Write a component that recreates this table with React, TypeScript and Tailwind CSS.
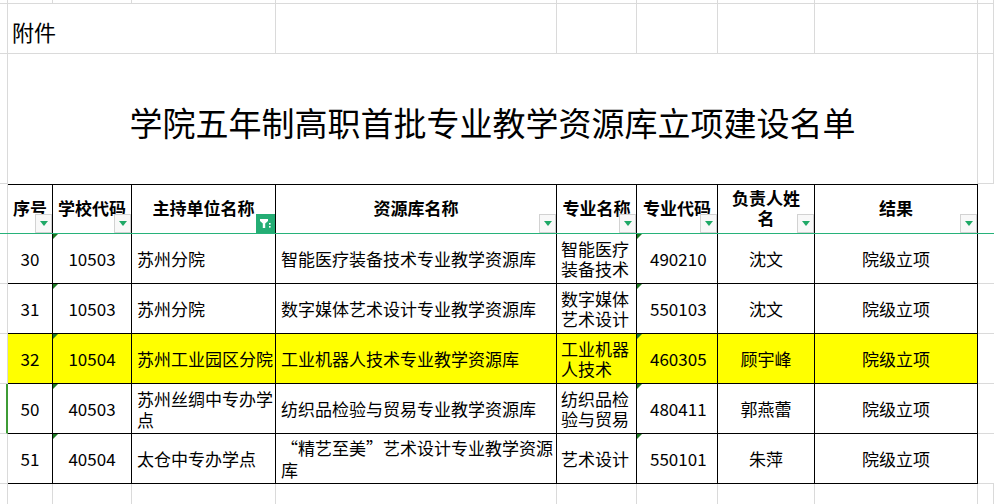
import React from "react";

type Row = {
  no: string;
  code: string;
  unit: string;
  lib: React.ReactNode;
  major: string;
  mcode: string;
  lead: string;
  result: string;
  hl?: boolean;
  sel?: boolean;
};

const rows: Row[] = [
  { no: "30", code: "10503", unit: "苏州分院", lib: "智能医疗装备技术专业教学资源库", major: "智能医疗装备技术", mcode: "490210", lead: "沈文", result: "院级立项" },
  { no: "31", code: "10503", unit: "苏州分院", lib: "数字媒体艺术设计专业教学资源库", major: "数字媒体艺术设计", mcode: "550103", lead: "沈文", result: "院级立项" },
  { no: "32", code: "10504", unit: "苏州工业园区分院", lib: "工业机器人技术专业教学资源库", major: "工业机器人技术", mcode: "460305", lead: "顾宇峰", result: "院级立项", hl: true },
  { no: "50", code: "40503", unit: "苏州丝绸中专办学点", lib: "纺织品检验与贸易专业教学资源库", major: "纺织品检验与贸易", mcode: "480411", lead: "郭燕蕾", result: "院级立项", sel: true },
  {
    no: "51",
    code: "40504",
    unit: "太仓中专办学点",
    lib: (
      <>
        “精艺至美”艺术设计专业教学资源
        <br />库
      </>
    ),
    major: "艺术设计",
    mcode: "550101",
    lead: "朱萍",
    result: "院级立项",
  },
];

const gray = "border-r border-b border-[#dadada]";
const blk = "relative border-r border-b border-black";

const FilterBtn = () => (
  <span className="absolute right-0 bottom-0 flex h-[19px] w-[17px] items-center justify-center border border-[#d2d2d2] bg-[#f8f8f8]">
    <span className="h-0 w-0 border-x-[4px] border-t-[5px] border-x-transparent border-t-[#1fa866]" />
  </span>
);

const ActiveFilter = () => (
  <span className="absolute right-0 bottom-0 flex h-[19px] w-[19px] items-center justify-center bg-[#24ad74]">
    <svg width="13" height="13" viewBox="0 0 13 13">
      <path d="M1 2h8v2L6.2 6.5V11H3.8V6.5L1 4z" fill="white" />
      <rect x="10" y="6" width="1.6" height="1.6" fill="white" />
      <rect x="10" y="9" width="1.6" height="1.6" fill="white" />
    </svg>
  </span>
);

const Tri = () => (
  <span className="absolute left-0 top-0 h-0 w-0 border-t-[5px] border-r-[5px] border-t-[#1d7a22] border-r-transparent" />
);

export default function App() {
  return (
    <div className="relative h-[504px] w-[994px] overflow-hidden bg-white text-black font-['Noto_Sans_CJK_SC',sans-serif]">
      <div className="grid grid-cols-[8px_45px_79px_144px_281px_80px_81px_97px_163px_16px] grid-rows-[4px_50px_130px_repeat(6,50px)_20px]">
        {/* top partial row */}
        {Array.from({ length: 10 }).map((_, i) => (
          <div key={"t" + i} className={gray} />
        ))}

        {/* 附件 row */}
        <div className={gray} />
        <div className={`col-span-3 flex items-center pl-[4px] pt-[5px] text-[22px] ${gray}`}>附件</div>
        {Array.from({ length: 6 }).map((_, i) => (
          <div key={"a" + i} className={gray} />
        ))}

        {/* title row */}
        <div className={gray} />
        <div className="col-span-8 flex items-center justify-center border-r border-[#dadada] pt-[8px] text-[33px]">
          学院五年制高职首批专业教学资源库立项建设名单
        </div>
        <div className={gray} />

        {/* header */}
        <div className={gray} />
        {[
          ["序号", "f"],
          ["学校代码", "f"],
          ["主持单位名称", "a"],
          ["资源库名称", "f"],
          ["专业名称", "f"],
          ["专业代码", "f"],
          ["负责人姓\n名", "f"],
          ["结果", "f"],
        ].map(([t, k]) => (
          <div
            key={t}
            className={`${blk} flex items-center justify-center border-t whitespace-pre-line text-center text-[17px] leading-[20px] font-bold`}
          >
            <span className="pb-[2px]">{t}</span>
            {k === "a" ? <ActiveFilter /> : <FilterBtn />}
          </div>
        ))}
        <div className="border-b border-[#dadada]" />

        {/* data rows */}
        {rows.map((r) => {
          const bg = r.hl ? "bg-[#ffff00]" : "";
          return (
            <React.Fragment key={r.no}>
              <div
                className={
                  r.sel
                    ? "border-b border-[#dadada] border-r-2 border-r-[#3d9b35]"
                    : gray
                }
              />
              <div className={`${blk} ${bg} flex items-center justify-center text-[17px]`}>{r.no}</div>
              <div className={`${blk} ${bg} flex items-center justify-center text-[17px]`}>
                <Tri />
                {r.code}
              </div>
              <div className={`${blk} ${bg} flex items-center pl-[5px] text-[17px] leading-[21px]`}>{r.unit}</div>
              <div className={`${blk} ${bg} flex items-center pl-[5px] text-[17px] leading-[22px]`}>
                <span>{r.lib}</span>
              </div>
              <div className={`${blk} ${bg} flex items-center pl-[4px] text-[17px] leading-[20px]`}>{r.major}</div>
              <div className={`${blk} ${bg} flex items-center pl-[13px] text-[17px]`}>
                <Tri />
                {r.mcode}
              </div>
              <div className={`${blk} ${bg} flex items-center justify-center text-[17px]`}>{r.lead}</div>
              <div className={`${blk} ${bg} flex items-center justify-center text-[17px]`}>{r.result}</div>
              <div className="border-b border-[#dadada]" />
            </React.Fragment>
          );
        })}

        {/* bottom partial row */}
        {Array.from({ length: 10 }).map((_, i) => (
          <div key={"b" + i} className="border-r border-[#dadada]" />
        ))}
      </div>

      {/* frozen pane line */}
      <div className="absolute left-0 right-0 top-[233px] h-px bg-[#27b27a]" />
    </div>
  );
}
